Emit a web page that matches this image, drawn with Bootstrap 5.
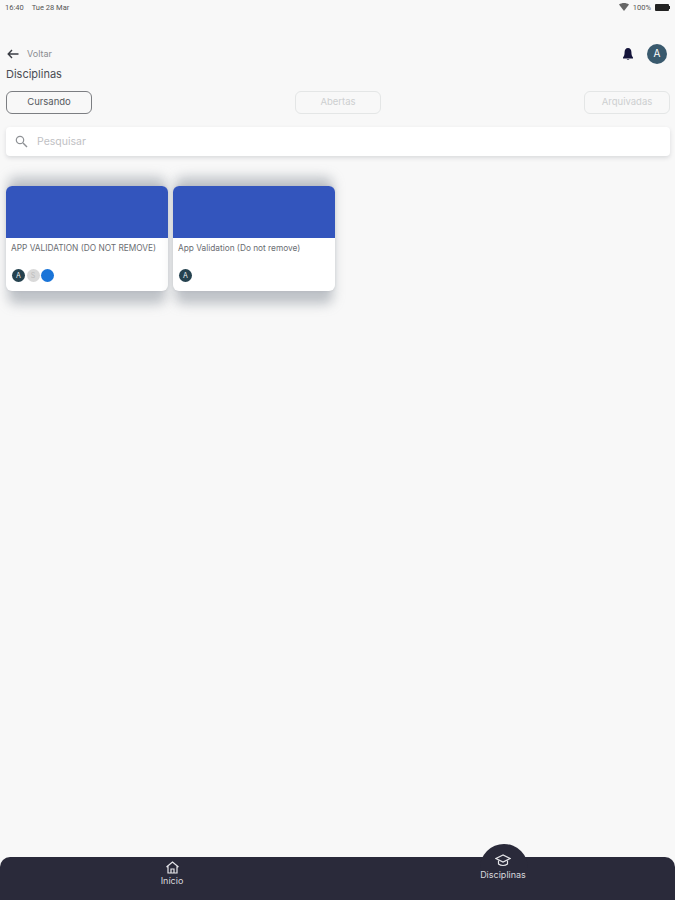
<!DOCTYPE html>
<html lang="pt">
<head>
<meta charset="utf-8">
<title>Disciplinas</title>
<link rel="stylesheet" href="https://cdn.jsdelivr.net/npm/bootstrap@5.3.0/dist/css/bootstrap.min.css">
<style>
html,body{height:100%}
body{background:#f8f8f8;font-family:Inter,"Liberation Sans",sans-serif;color:#33363f;overflow:hidden}
.app-shell{height:900px}
.status-strip{height:13px;padding:1px 5px 0 5px;font-size:7.5px;line-height:11px;color:#555;font-family:Roboto,sans-serif}
.back-row{height:25px;margin-top:28px;padding:0 8px 0 7px}
.back-label{font-size:9px;color:#8a8c90;margin-left:8px}
.avatar-top{width:20px;height:20px;background:#3a5a6e;color:#fff;font-size:10px}
.page-heading{font-size:11px;line-height:14px;margin:0;padding:1px 6px 0;font-weight:400;color:#4a4d54}
.tab-row{padding:0 5px 0 6px;margin-top:10px}
.tab-pill{width:86px;height:23px;padding:0;font-size:9.5px;border-radius:6px;background:transparent}
.tab-on{border:1px solid #7c7e82;color:#55585e}
.tab-off{border:1px solid #e4e6e6;color:#cdcfd0}
.search-box{height:29px;margin:13px 5px 0 6px;background:#fff;border-radius:4px;box-shadow:0 2px 4px rgba(60,70,80,.16);padding-left:9px;gap:9px}
.search-text{font-size:10.5px;color:#bfc1c4}
.course-grid{padding:30px 6px 0;gap:5px}
.course-tile{width:162px;height:105px;background:#fff;border-radius:6px;overflow:hidden;box-shadow:0 0 3px rgba(90,100,110,.14)}
.tile-wrap{position:relative}
.tile-wrap::before{content:"";position:absolute;left:2px;right:2px;top:-9px;bottom:-13px;background:rgba(110,120,130,.42);filter:blur(6px);border-radius:8px}
.tile-wrap .course-tile{position:relative}
.tile-cover{height:52px;background:#3355bd}
.tile-name{font-size:8.3px;line-height:10px;color:#6a6d72;padding:5px 5px 0;height:31px;white-space:nowrap}
.tile-people{padding-left:6px;gap:1.5px}
.dot-person{width:13px;height:13px;font-size:7px;line-height:1}
.dot-a{background:#25424f;color:#e8eef0}
.dot-b{background:#d9d9d9;color:#bdbdbd}
.dot-c{background:#1a74d8}
.page-fill{flex:1 1 auto}
.tabbar-zone{height:43px;background:#2a2a3a;border-radius:10px 10px 0 0;color:#d8d8de;font-size:9px;line-height:10px}
.tabbar-bump{width:48px;height:26px;top:-13px;left:480px;background:#2a2a3a;border-radius:24px 24px 0 0}
.tab-item{width:60px;gap:2px}
.tab-home{left:142px;top:4px}
.tab-course{left:473px;top:-3px}
.tab-course span{margin-top:1px}
</style>
</head>
<body>
<div class="app-shell d-flex flex-column">
  <div class="status-strip d-flex justify-content-between align-items-center">
    <div class="d-flex gap-2"><span>16:40</span><span>Tue 28 Mar</span></div>
    <div class="d-flex align-items-center gap-1">
      <svg width="10" height="8" viewBox="0 0 10 8" aria-hidden="true"><path d="M0 1.500C3-.5 7-.5 10 1.500L5 8Z" fill="#666"/></svg>
      <span>100%</span>
      <svg width="15" height="7" viewBox="0 0 15 7" aria-hidden="true"><rect width="14" height="7" rx="1" fill="#222"/><rect x="14" y="2" width="1" height="3" fill="#222"/></svg>
    </div>
  </div>

  <div class="back-row d-flex justify-content-between align-items-center">
    <div class="d-flex align-items-center">
      <svg width="12" height="10" viewBox="0 0 12 10" aria-hidden="true"><path d="M11.500 5H1.500M5 1 1.200 5 5 9" fill="none" stroke="#3a3d44" stroke-width="1.400"/></svg>
      <span class="back-label">Voltar</span>
    </div>
    <div class="d-flex align-items-center gap-2">
      <svg class="me-1" width="14" height="14" viewBox="0 0 14 14" aria-hidden="true"><path d="M7 1C4.800 1 3.600 2.700 3.600 5c0 3-.6 4.300-1.600 5.500v1h10v-1C11 9.300 10.400 8 10.400 5 10.400 2.700 9.200 1 7 1Z" fill="#14143a"/><path d="M5.600 12.200a1.500 1.300 0 0 0 2.800 0Z" fill="#14143a"/></svg>
      <span class="avatar-top rounded-circle d-flex align-items-center justify-content-center">A</span>
    </div>
  </div>

  <h1 class="page-heading">Disciplinas</h1>

  <div class="tab-row d-flex justify-content-between">
    <button type="button" class="btn tab-pill tab-on">Cursando</button>
    <button type="button" class="btn tab-pill tab-off">Abertas</button>
    <button type="button" class="btn tab-pill tab-off">Arquivadas</button>
  </div>

  <div class="search-box d-flex align-items-center">
    <svg width="13" height="13" viewBox="0 0 13 13" aria-hidden="true"><circle cx="5" cy="5" r="3.700" fill="none" stroke="#8f9296" stroke-width="1.200"/><path d="M8 8l4 4" stroke="#8f9296" stroke-width="1.400"/></svg>
    <span class="search-text">Pesquisar</span>
  </div>

  <div class="course-grid d-flex">
    <div class="tile-wrap">
      <div class="course-tile">
        <div class="tile-cover"></div>
        <div class="tile-name">APP VALIDATION (DO NOT REMOVE)</div>
        <div class="tile-people d-flex">
          <span class="dot-person dot-a rounded-circle d-flex align-items-center justify-content-center">A</span>
          <span class="dot-person dot-b rounded-circle d-flex align-items-center justify-content-center">S</span>
          <span class="dot-person dot-c rounded-circle"></span>
        </div>
      </div>
    </div>
    <div class="tile-wrap">
      <div class="course-tile">
        <div class="tile-cover"></div>
        <div class="tile-name">App Validation (Do not remove)</div>
        <div class="tile-people d-flex">
          <span class="dot-person dot-a rounded-circle d-flex align-items-center justify-content-center">A</span>
        </div>
      </div>
    </div>
  </div>

  <div class="page-fill"></div>

  <nav class="tabbar-zone position-relative">
    <div class="tabbar-bump position-absolute"></div>
    <div class="tab-item tab-home position-absolute d-flex flex-column align-items-center">
      <svg width="15" height="13" viewBox="0 0 15 13" aria-hidden="true"><path d="M1.500 6 7.500 1l6 5M3 5v7h9V5M6 12V8h3v4" fill="none" stroke="#e6e6ea" stroke-width="1.200"/></svg>
      <span>Início</span>
    </div>
    <div class="tab-item tab-course position-absolute d-flex flex-column align-items-center">
      <svg width="16" height="13" viewBox="0 0 16 13" aria-hidden="true"><path d="M8 1 1 4.500 8 8l7-3.500Z" fill="none" stroke="#e6e6ea" stroke-width="1.200"/><path d="M3.500 6.500V10c2.500 2 6.500 2 9 0V6.500" fill="none" stroke="#e6e6ea" stroke-width="1.200"/></svg>
      <span>Disciplinas</span>
    </div>
  </nav>
</div>
<script src="https://cdn.jsdelivr.net/npm/bootstrap@5.3.0/dist/js/bootstrap.bundle.min.js"></script>
</body>
</html>
